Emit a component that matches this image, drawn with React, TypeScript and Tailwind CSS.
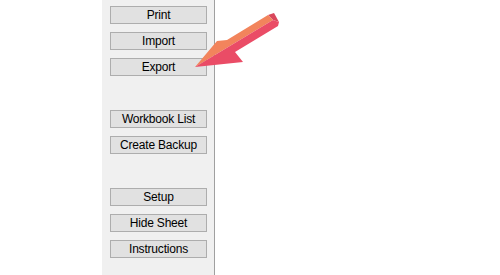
import React from "react";

const Btn = ({ label }: { label: string }) => (
  <div className="h-[18px] w-[97px] border border-[#adadad] bg-[#e1e1e1] flex items-center justify-center text-[12px] leading-none text-black tracking-[-0.2px]">
    {label}
  </div>
);

const Gap = () => <div className="h-[18px]" />;

export default function App() {
  return (
    <div
      className="relative w-[500px] h-[275px] bg-white flex overflow-hidden"
      style={{ fontFamily: '"Liberation Sans", Arial, sans-serif' }}
    >
      <div className="w-[102px]" />
      <div className="w-[113px] h-full bg-[#f0f0f0] border-r border-[#a0a0a0] flex flex-col gap-2 pt-[6px] pl-[8px]">
        <Btn label="Print" />
        <Btn label="Import" />
        <Btn label="Export" />
        <Gap />
        <Btn label="Workbook List" />
        <Btn label="Create Backup" />
        <Gap />
        <Btn label="Setup" />
        <Btn label="Hide Sheet" />
        <Btn label="Instructions" />
      </div>
      <svg
        className="absolute left-0 top-0 pointer-events-none"
        width="500"
        height="275"
        viewBox="0 0 500 275"
      >
        <polygon points="268,15 274,13 279,22 273,20" fill="#d9485c" />
        <polygon points="268,15 227,40 217,41 195,67 273,20" fill="#f2845c" />
        <polygon points="273,20 195,67 243,62 235,52 278,26 279,22" fill="#ea4c66" />
      </svg>
    </div>
  );
}
